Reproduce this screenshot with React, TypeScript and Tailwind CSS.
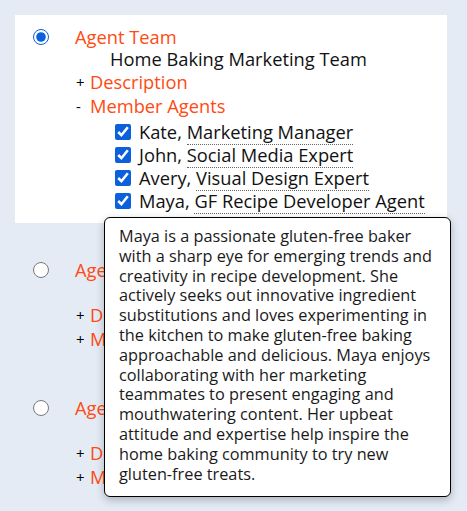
import React from 'react';

const members = [
    { name: 'Kate', role: 'Marketing Manager' },
    { name: 'John', role: 'Social Media Expert' },
    { name: 'Avery', role: 'Visual Design Expert' },
    { name: 'Maya', role: 'GF Recipe Developer Agent' },
];

// line breaks kept as in the tooltip
const mayaBio = [
    'Maya is a passionate gluten-free baker',
    'with a sharp eye for emerging trends and',
    'creativity in recipe development. She',
    'actively seeks out innovative ingredient',
    'substitutions and loves experimenting in',
    'the kitchen to make gluten-free baking',
    'approachable and delicious. Maya enjoys',
    'collaborating with her marketing',
    'teammates to present engaging and',
    'mouthwatering content. Her upbeat',
    'attitude and expertise help inspire the',
    'home baking community to try new',
    'gluten-free treats.',
];

function TeamOption({ selected, teamName, open }: { selected: boolean; teamName: string; open: boolean }) {
    return (
        <div className={`flex items-start pl-[18px] pt-[11px] pb-[11px] ${selected ? 'bg-white' : ''}`}>
            <input
                type="radio"
                name="team"
                defaultChecked={selected}
                className="mt-[3px] h-4 w-4 shrink-0 accent-[#0b60dc]"
            />
            <div className="ml-[26px] text-[18.3px] leading-[22px]">
                <div className="text-[#ff4a12]">Agent Team</div>
                <div className="h-[22px] pl-[35px] text-[#111]">{teamName}</div>
                <div className="mt-[1px] flex">
                    <span className="w-[15px] pl-[1px] text-[15px] text-black">+</span>
                    <span className="text-[#ff4a12]">Description</span>
                </div>
                <div className="mt-[2px] flex">
                    <span className="w-[15px] pl-[1px] text-[15px] text-black">{open ? '-' : '+'}</span>
                    <span className="text-[#ff4a12]">Member Agents</span>
                </div>
                {open && (
                    <div className="mt-[3px] pl-[40px]">
                        {members.map((m) => (
                            <label key={m.name} className="flex h-[23px] items-center text-[#111]">
                                <input type="checkbox" defaultChecked className="h-4 w-4 accent-[#0b60dc]" />
                                <span className="ml-[8px] whitespace-nowrap">
                                    {m.name},{' '}
                                    <span className="border-b border-dotted border-[#666]">{m.role}</span>
                                </span>
                            </label>
                        ))}
                    </div>
                )}
            </div>
        </div>
    );
}

export default function App() {
    return (
        <div
            className="relative min-h-[511px] bg-[#e4ebf5] pt-[15px] pl-[15px] pr-[20px]"
            style={{ fontFamily: '"Open Sans", Lato, sans-serif' }}
        >
            <div className="flex flex-col gap-[25px]">
                <TeamOption selected teamName="Home Baking Marketing Team" open />
                <TeamOption selected={false} teamName="" open={false} />
                <TeamOption selected={false} teamName="" open={false} />
            </div>

            <div className="absolute left-[104px] top-[217px] h-[280px] w-[347px] rounded-md border border-black bg-white px-[14px] pt-[9px] text-[16.3px] leading-[19.8px] text-[#1a1a1a] shadow-[0_3px_8px_rgba(0,0,0,0.25)]">
                {mayaBio.map((line) => (
                    <div key={line} className="whitespace-nowrap">
                        {line}
                    </div>
                ))}
            </div>
        </div>
    );
}
